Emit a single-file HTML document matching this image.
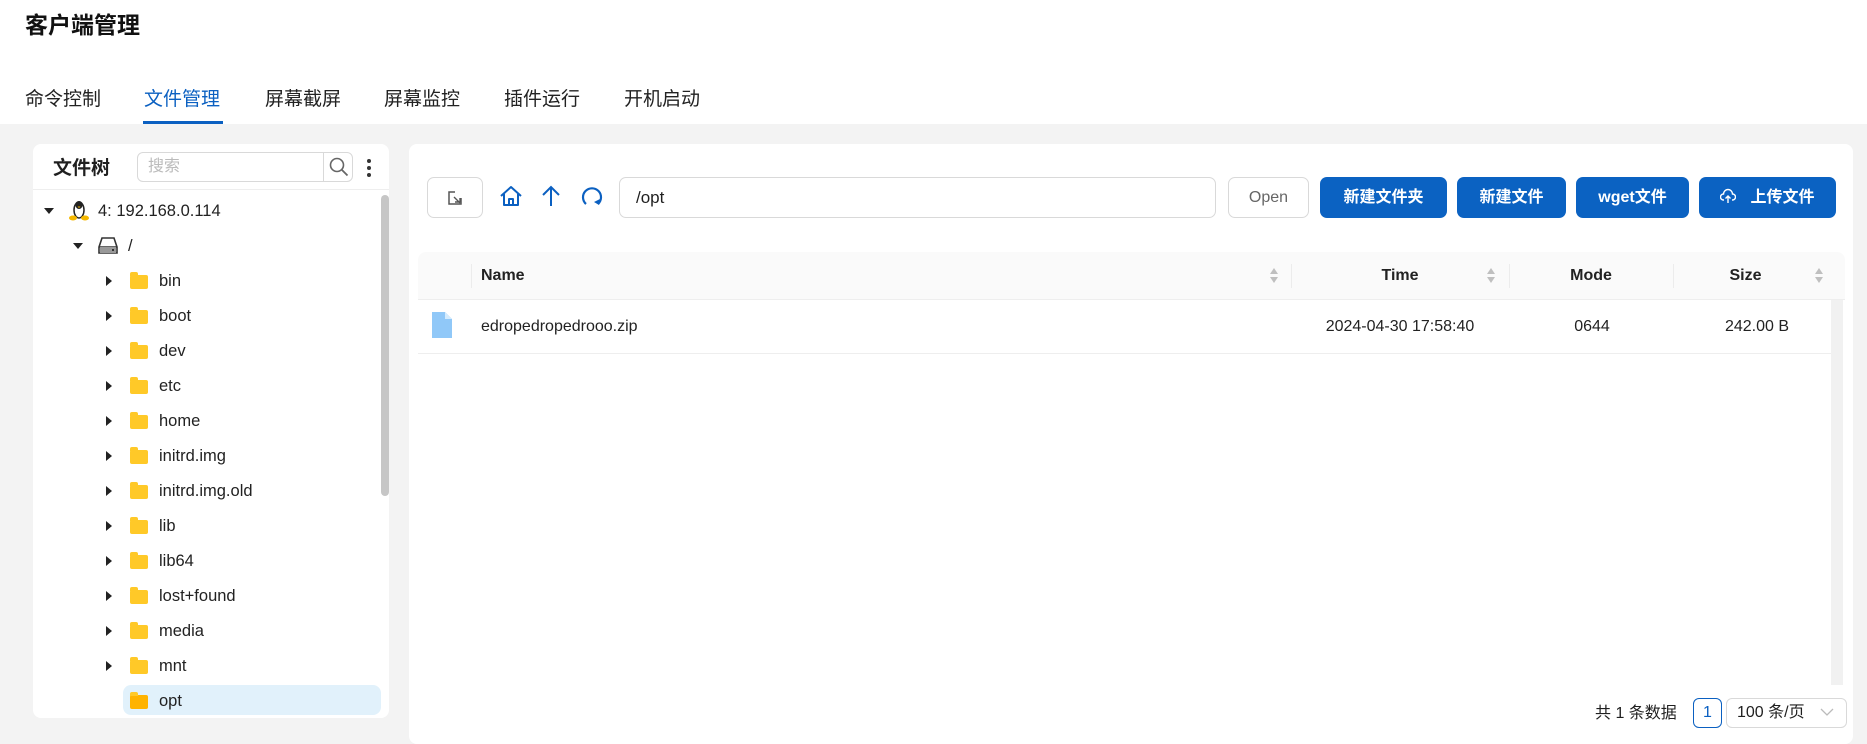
<!DOCTYPE html>
<html><head><meta charset="utf-8"><style>
*{box-sizing:border-box;margin:0;padding:0}
body{width:1867px;height:732px;overflow:hidden;background:#f3f3f3;font-family:"Liberation Sans","Noto Sans CJK SC",sans-serif;color:#1f1f1f;position:relative}
.abs{position:absolute}
#hdr{left:0;top:0;width:1867px;height:124px;background:#fff}
.tab{position:absolute;top:86px;font-size:19px;line-height:28px;color:#222}
.card{background:#fff;border-radius:8px;position:absolute}
.row{position:absolute;height:30px;line-height:30px;font-size:16.5px;color:#222}
.arr{position:absolute;width:0;height:0;border-top:5px solid transparent;border-bottom:5px solid transparent;border-left:6px solid #222}
.fold{position:absolute;width:18px;height:14px;background:#ffc928;border-radius:2px}
.fold:before{content:"";position:absolute;left:0;top:-3px;width:8px;height:4px;background:#ffc928;border-radius:2px 2px 0 0}
.btn{position:absolute;top:177px;height:41px;border-radius:7px;background:#0b62c2;color:#fff;font-size:16px;line-height:41px;text-align:center;font-weight:600}
.th{position:absolute;top:252px;height:48px;line-height:48px;font-size:16px;font-weight:bold;color:#222}
.sep{position:absolute;top:264px;width:1px;height:24px;background:#ececec}
.sort{position:absolute;top:268px;width:8px;height:16px}
.sort:before{content:"";position:absolute;left:0;top:0;border-left:4.5px solid transparent;border-right:4.5px solid transparent;border-bottom:6px solid #bfbfbf}
.sort:after{content:"";position:absolute;left:0;top:9px;border-left:4.5px solid transparent;border-right:4.5px solid transparent;border-top:6px solid #bfbfbf}
.td{position:absolute;top:300px;height:53px;line-height:53px;font-size:16px;color:#222}
</style></head><body>
<div id="hdr" class="abs"></div>
<div class="abs" style="left:25px;top:10px;font-size:23px;font-weight:bold;line-height:30px;color:#111">客户端管理</div>
<div class="tab" style="left:25px">命令控制</div>
<div class="tab" style="left:144px;color:#0b60c1">文件管理</div>
<div class="abs" style="left:143px;top:121px;width:80px;height:3px;background:#0b60c1"></div>
<div class="tab" style="left:265px">屏幕截屏</div>
<div class="tab" style="left:384px">屏幕监控</div>
<div class="tab" style="left:504px">插件运行</div>
<div class="tab" style="left:624px">开机启动</div>

<!-- left card -->
<div class="card" style="left:33px;top:144px;width:356px;height:574px"></div>
<div class="abs" style="left:53px;top:155px;font-size:19px;font-weight:bold;line-height:28px">文件树</div>
<div class="abs" style="left:137px;top:152px;width:216px;height:30px;border:1px solid #d9d9d9;border-radius:6px"></div>
<div class="abs" style="left:148px;top:152px;font-size:16px;line-height:30px;color:#bbb">搜索</div>
<div class="abs" style="left:323px;top:152px;width:1px;height:30px;background:#d9d9d9"></div>
<svg class="abs" style="left:328px;top:156px" width="22" height="22" viewBox="0 0 22 22"><circle cx="9" cy="9" r="6.5" fill="none" stroke="#666" stroke-width="1.6"/><path d="M14 14l5.5 5.5" stroke="#666" stroke-width="1.8"/></svg>
<div class="abs" style="left:367px;top:159px;width:4px;height:4px;border-radius:2px;background:#333"></div>
<div class="abs" style="left:367px;top:166px;width:4px;height:4px;border-radius:2px;background:#333"></div>
<div class="abs" style="left:367px;top:173px;width:4px;height:4px;border-radius:2px;background:#333"></div>
<div class="abs" style="left:33px;top:189px;width:356px;height:1px;background:#eee"></div>
<div class="abs" style="left:381px;top:195px;width:8px;height:301px;background:#c6c6c6;border-radius:4px"></div>

<div class="abs" style="left:44px;top:208px;border-left:5px solid transparent;border-right:5px solid transparent;border-top:6px solid #222"></div>
<svg class="abs" style="left:69px;top:199px" width="20" height="22" viewBox="0 0 20 22"><ellipse cx="10" cy="11" rx="5" ry="8" fill="#fff" stroke="#222" stroke-width="1.5"/><ellipse cx="10" cy="6" rx="3.5" ry="4" fill="#222"/><ellipse cx="4" cy="19" rx="4" ry="2.5" fill="#f5b800"/><ellipse cx="16" cy="19" rx="4" ry="2.5" fill="#f5b800"/><path d="M8.5 7.5h3l-1.5 1.5z" fill="#f5b800"/></svg>
<div class="row" style="left:98px;top:196px">4: 192.168.0.114</div>
<div class="abs" style="left:73px;top:243px;border-left:5px solid transparent;border-right:5px solid transparent;border-top:6px solid #222"></div>
<svg class="abs" style="left:98px;top:236px" width="20" height="18" viewBox="0 0 20 18"><path d="M4 2h12l3 9v6H1v-6z" fill="none" stroke="#333" stroke-width="1.6"/><path d="M1 11h18" stroke="#333" stroke-width="1.6"/><rect x="2" y="11" width="16" height="6" fill="#999"/><rect x="14" y="13" width="2" height="2" fill="#333"/></svg>
<div class="row" style="left:128px;top:231px">/</div>

<div class="arr" style="left:106px;top:276px"></div><div class="fold" style="left:130px;top:275px"></div><div class="row" style="left:159px;top:266px">bin</div>
<div class="arr" style="left:106px;top:311px"></div><div class="fold" style="left:130px;top:310px"></div><div class="row" style="left:159px;top:301px">boot</div>
<div class="arr" style="left:106px;top:346px"></div><div class="fold" style="left:130px;top:345px"></div><div class="row" style="left:159px;top:336px">dev</div>
<div class="arr" style="left:106px;top:381px"></div><div class="fold" style="left:130px;top:380px"></div><div class="row" style="left:159px;top:371px">etc</div>
<div class="arr" style="left:106px;top:416px"></div><div class="fold" style="left:130px;top:415px"></div><div class="row" style="left:159px;top:406px">home</div>
<div class="arr" style="left:106px;top:451px"></div><div class="fold" style="left:130px;top:450px"></div><div class="row" style="left:159px;top:441px">initrd.img</div>
<div class="arr" style="left:106px;top:486px"></div><div class="fold" style="left:130px;top:485px"></div><div class="row" style="left:159px;top:476px">initrd.img.old</div>
<div class="arr" style="left:106px;top:521px"></div><div class="fold" style="left:130px;top:520px"></div><div class="row" style="left:159px;top:511px">lib</div>
<div class="arr" style="left:106px;top:556px"></div><div class="fold" style="left:130px;top:555px"></div><div class="row" style="left:159px;top:546px">lib64</div>
<div class="arr" style="left:106px;top:591px"></div><div class="fold" style="left:130px;top:590px"></div><div class="row" style="left:159px;top:581px">lost+found</div>
<div class="arr" style="left:106px;top:626px"></div><div class="fold" style="left:130px;top:625px"></div><div class="row" style="left:159px;top:616px">media</div>
<div class="arr" style="left:106px;top:661px"></div><div class="fold" style="left:130px;top:660px"></div><div class="row" style="left:159px;top:651px">mnt</div>
<div class="abs" style="left:123px;top:685px;width:258px;height:30px;background:#e1f1fb;border-radius:8px"></div>
<div class="fold" style="left:130px;top:695px;background:#ffb300"></div><div class="row" style="left:159px;top:686px">opt</div>

<!-- right card -->
<div class="card" style="left:409px;top:144px;width:1444px;height:600px"></div>
<div class="abs" style="left:427px;top:177px;width:56px;height:41px;border:1px solid #d9d9d9;border-radius:7px"></div>
<svg class="abs" style="left:447px;top:190px" width="16" height="16" viewBox="0 0 16 16"><path d="M8 2H2v12h12V8" fill="none" stroke="#555" stroke-width="1.5"/><path d="M7 7l6 6M8 12h5V8" fill="none" stroke="#555" stroke-width="1.4"/></svg>
<svg class="abs" style="left:499px;top:184px" width="24" height="24" viewBox="0 0 24 24"><path d="M2 12L12 3l10 9M5 10v11h14V10M10 21v-6h4v6" fill="none" stroke="#0b60c1" stroke-width="2" stroke-linejoin="round"/></svg>
<svg class="abs" style="left:541px;top:184px" width="20" height="24" viewBox="0 0 20 24"><path d="M10 22V3M2 11l8-8 8 8" fill="none" stroke="#0b60c1" stroke-width="2"/></svg>
<svg class="abs" style="left:580px;top:185px" width="24" height="24" viewBox="0 0 24 24"><path d="M6 19A9 9 0 1 1 18 19" fill="none" stroke="#0b60c1" stroke-width="2.2"/><path d="M14 17l5 3 1-6z" fill="#0b60c1"/></svg>
<div class="abs" style="left:619px;top:177px;width:597px;height:41px;border:1px solid #d9d9d9;border-radius:7px;padding-left:16px;font-size:17px;line-height:39px">/opt</div>
<div class="abs" style="left:1228px;top:177px;width:81px;height:41px;border:1px solid #d9d9d9;border-radius:7px;text-align:center;font-size:16px;line-height:39px;color:#666">Open</div>
<div class="btn" style="left:1320px;width:127px">新建文件夹</div>
<div class="btn" style="left:1457px;width:109px">新建文件</div>
<div class="btn" style="left:1576px;width:113px">wget文件</div>
<div class="btn" style="left:1699px;width:137px"><svg style="vertical-align:-2px;margin-right:14px" width="16" height="16" viewBox="0 0 16 16"><path d="M4 12H3.5a3 3 0 0 1 0-6 4.5 4.5 0 0 1 9 0 3 3 0 0 1 0 6H12M8 15V8M5.5 10.5L8 8l2.5 2.5" fill="none" stroke="#fff" stroke-width="1.4"/></svg>上传文件</div>

<!-- table -->
<div class="abs" style="left:418px;top:252px;width:1427px;height:48px;background:#fafafa;border-radius:8px 8px 0 0;border-bottom:1px solid #eee"></div>
<div class="sep" style="left:471px"></div>
<div class="th" style="left:481px">Name</div>
<div class="sort" style="left:1270px"></div>
<div class="sep" style="left:1291px"></div>
<div class="th" style="left:1291px;width:218px;text-align:center">Time</div>
<div class="sort" style="left:1487px"></div>
<div class="sep" style="left:1509px"></div>
<div class="th" style="left:1509px;width:164px;text-align:center">Mode</div>
<div class="sep" style="left:1673px"></div>
<div class="th" style="left:1673px;width:145px;text-align:center">Size</div>
<div class="sort" style="left:1815px"></div>
<div class="abs" style="left:1831px;top:300px;width:12px;height:385px;background:#f1f1f1"></div>
<svg class="abs" style="left:432px;top:312px" width="20" height="26" viewBox="0 0 20 26"><path d="M0 0h13l7 7v19H0z" fill="#90c8f8"/><path d="M13 0v7h7z" fill="#d4ebfd"/></svg>
<div class="td" style="left:481px">edropedropedrooo.zip</div>
<div class="td" style="left:1291px;width:218px;text-align:center">2024-04-30 17:58:40</div>
<div class="td" style="left:1560px;width:64px;text-align:center">0644</div>
<div class="td" style="left:1673px;width:168px;text-align:center">242.00 B</div>
<div class="abs" style="left:418px;top:353px;width:1413px;height:1px;background:#eee"></div>

<div class="abs" style="left:1595px;top:700px;font-size:16px;line-height:28px">共 1 条数据</div>
<div class="abs" style="left:1693px;top:698px;width:29px;height:30px;border:1px solid #0b60c1;border-radius:6px;text-align:center;line-height:28px;font-size:16px;color:#0b60c1">1</div>
<div class="abs" style="left:1726px;top:698px;width:121px;height:30px;border:1px solid #d9d9d9;border-radius:6px;font-size:16px;line-height:28px;padding-left:10px">100 条/页</div>
<svg class="abs" style="left:1820px;top:707px" width="14" height="10" viewBox="0 0 14 10"><path d="M1 2l6 6 6-6" fill="none" stroke="#bbb" stroke-width="1.3"/></svg>
</body></html>
